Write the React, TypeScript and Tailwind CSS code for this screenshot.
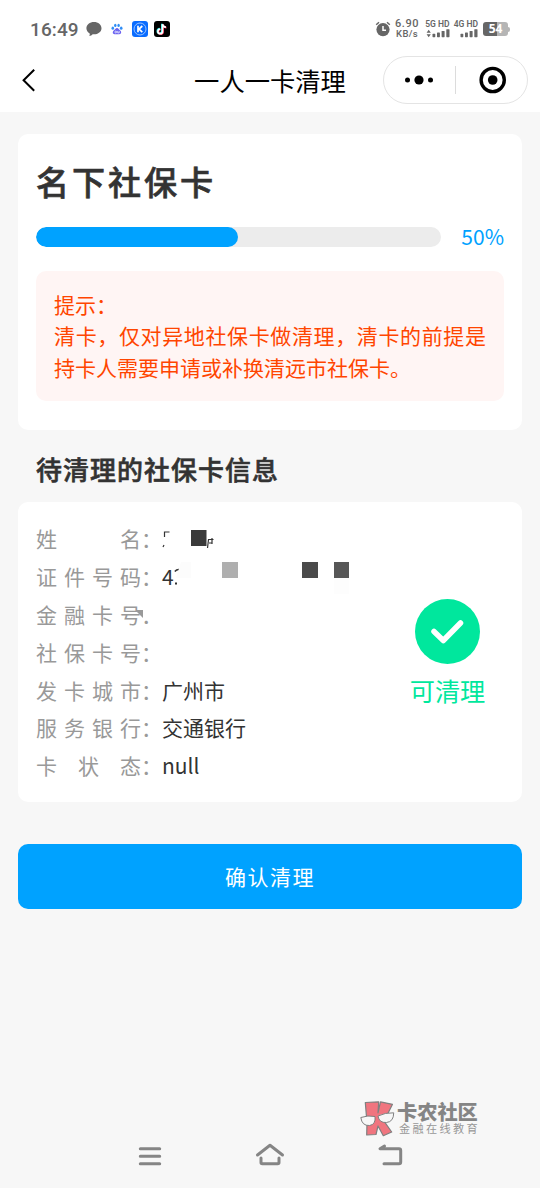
import type { ReactNode } from "react";

type InfoRow = {
  label: string;
  value?: string;
};

const rows: InfoRow[] = [
  { label: "姓名" },
  { label: "证件号码", value: "4" },
  { label: "金融卡号" },
  { label: "社保卡号" },
  { label: "发卡城市", value: "广州市" },
  { label: "服务银行", value: "交通银行" },
  { label: "卡状态", value: "null" },
];

const progress = 50;

function BaiduIcon() {
  return (
    <svg width="12" height="12" viewBox="0 0 12 12">
      <ellipse cx="1.8" cy="5.2" rx="1.3" ry="1.6" fill="#2f8df5" />
      <ellipse cx="4.3" cy="2.4" rx="1.2" ry="1.7" fill="#2f8df5" />
      <ellipse cx="7.6" cy="2.4" rx="1.2" ry="1.7" fill="#2f8df5" />
      <ellipse cx="10.2" cy="5.2" rx="1.3" ry="1.6" fill="#2f8df5" />
      <path
        d="M6 5c1.4 0 2 1.6 3.2 2.6 1.7 1.5 1 3.7-.9 3.7H3.6c-1.9 0-2.5-2.2-.8-3.7C4 6.6 4.6 5 6 5z"
        fill="#6a62f0"
      />
      <circle cx="4.7" cy="9" r=".9" fill="none" stroke="#fff" strokeWidth=".7" />
      <path d="M6.7 7.9v2h1.5v-2" fill="none" stroke="#fff" strokeWidth=".7" />
    </svg>
  );
}

function KIcon() {
  return (
    <svg width="16" height="16" viewBox="0 0 16 16">
      <rect width="16" height="16" rx="3" fill="#0a6cff" />
      <circle cx="8" cy="8" r="6" fill="none" stroke="#a9cdff" strokeWidth=".9" />
      <path d="M6 4.8v6.4M10.3 5L7 8l3.3 3.2" fill="none" stroke="#fff" strokeWidth="1.7" />
    </svg>
  );
}

function TikTokIcon() {
  const note = "M8.5 3.2v7.2a2.3 2.3 0 1 1-2.3-2.3M8.5 3.2c.3 1.9 1.6 2.9 3.4 3";
  return (
    <svg width="16" height="16" viewBox="0 0 16 16">
      <rect width="16" height="16" rx="3" fill="#000" />
      <g fill="none" strokeWidth="1.7">
        <path d={note} stroke="#25f4ee" transform="translate(-.6 -.4)" />
        <path d={note} stroke="#fe2c55" transform="translate(.6 .4)" />
        <path d={note} stroke="#fff" />
      </g>
    </svg>
  );
}

function Signal({ label, arrows }: { label: string; arrows?: boolean }) {
  return (
    <div className="flex w-[24px] flex-col items-end">
      <span className="text-[8.5px] leading-[8px] font-semibold whitespace-nowrap">{label}</span>
      <svg className="mt-px" width="24" height="9" viewBox="0 0 24 9" fill="#666">
        {arrows ? <path d="M.6 3.7L2.7.8l2.1 2.9zM.6 5.3l2.1 2.9 2.1-2.9z" /> : null}
        <rect x="6.5" y="4.8" width="2.8" height="3.4" rx=".6" />
        <rect x="11" y="3.5" width="2.9" height="4.7" rx=".6" />
        <rect x="15.6" y="2" width="3" height="6.2" rx=".6" />
        <rect x="20.3" y=".2" width="3.2" height="8" rx=".6" />
      </svg>
    </div>
  );
}

function StatusBar() {
  return (
    <div className="flex h-[56px] items-center pt-[2px] pr-[30px] pl-[30px] text-[#666]">
      <span className="w-[56px] text-[19px] leading-none font-medium tracking-[0.1px] [font-family:Roboto,sans-serif]">
        16:49
      </span>
      <svg width="16" height="16" viewBox="0 0 16 16" fill="#666">
        <path d="M8 1c4.2 0 7.5 2.7 7.5 6.200S12.200 13.300 8 13.300c-.5 0-1 0-1.400-.1-.8.9-2 1.600-3.300 1.700.5-.7.6-1.600.4-2.500C1.700 11.300.4 9.400.4 7.200.4 3.700 3.800 1 8 1z" />
      </svg>
      <div className="ml-[9px] flex items-center">
        <BaiduIcon />
        <span className="ml-[9px]">
          <KIcon />
        </span>
        <span className="ml-[6px]">
          <TikTokIcon />
        </span>
      </div>

      <div className="ml-auto flex items-center">
        <svg width="16" height="16" viewBox="0 0 16 16">
          <circle cx="8" cy="8.6" r="6.6" fill="#666" />
          <path d="M1.200 3.700L4 1.300M14.800 3.700L12 1.300" stroke="#666" strokeWidth="1.5" />
          <path d="M8 5v4.200h3" fill="none" stroke="#fff" strokeWidth="1.5" />
        </svg>
        <div className="ml-[4px] flex w-[25px] flex-col items-center font-medium [font-family:Roboto,sans-serif]">
          <span className="text-[11px] leading-[10px] tracking-[0.5px]">6.90</span>
          <span className="text-[9.5px] leading-[10px] tracking-[0.3px]">KB/s</span>
        </div>
        <div className="ml-[6px] flex gap-[4.5px] [font-family:Roboto,sans-serif]">
          <Signal label="5G HD" arrows />
          <Signal label="4G HD" />
        </div>
        <div className="ml-[5px] flex items-center">
          <div className="flex h-[14px] w-[25px] items-center justify-center rounded-[3px] bg-[linear-gradient(90deg,#666_56%,#b5b5b5_56%)] text-[12px] leading-none font-bold text-white [font-family:'Open_Sans',sans-serif]">
            54
          </div>
          <div className="h-[5px] w-[2px] rounded-r-sm bg-[#b5b5b5]" />
        </div>
      </div>
    </div>
  );
}

function NavBar() {
  return (
    <div className="relative flex h-[56px] items-center justify-center pb-[6px]">
      <svg className="absolute top-[12px] left-[21px]" width="16" height="25" viewBox="0 0 16 25">
        <path d="M13.2 1.800L2.600 12.300l10.600 10.500" fill="none" stroke="#000" strokeWidth="2" />
      </svg>
      <h1 className="text-[25.3px] leading-none text-black">一人一卡清理</h1>
      <div className="absolute top-0 left-[383px] flex h-[48px] w-[145px] items-center rounded-full border border-[#e4e4e4] bg-white">
        <svg width="71" height="46" viewBox="0 0 71 46">
          <circle cx="23.5" cy="23" r="2.5" />
          <circle cx="35" cy="23" r="4.6" />
          <circle cx="46.5" cy="23" r="2.5" />
        </svg>
        <div className="h-[28px] w-px bg-[#dcdcdc]" />
        <svg width="71" height="46" viewBox="0 0 71 46">
          <circle cx="36.7" cy="23" r="11.6" fill="none" stroke="#000" strokeWidth="3.4" />
          <circle cx="36.7" cy="23" r="4.8" />
        </svg>
      </div>
    </div>
  );
}

function Card({ className, children }: { className: string; children: ReactNode }) {
  return <section className={`mx-[18px] rounded-[10px] bg-white px-[18px] ${className}`}>{children}</section>;
}

// blocks hiding the personal data, drawn over the first three rows
function Redaction() {
  return (
    <svg className="absolute top-[28px] left-[118px]" width="220" height="94" viewBox="136 530 220 94">
      <path d="M164.500 537v-5h5M163 547l1-2" fill="none" stroke="#333" strokeWidth="1.2" />
      <rect x="191" y="530" width="15.5" height="16" fill="#3a3a3a" />
      <path d="M207.500 548l1-8.500h5M209 543h3.500M212 538v6" fill="none" stroke="#333" strokeWidth="1.2" />
      <path d="M174.800 571.500q2.600-3 6.600-1.300" fill="none" stroke="#333" strokeWidth="1.5" />
      <rect x="175" y="582.5" width="2" height="2" fill="#333" />
      <path d="M181 562h10v16h-15z" fill="#fcfcfc" />
      <rect x="222" y="562" width="16" height="16" fill="#afafaf" />
      <rect x="302" y="562" width="16" height="16" fill="#4a4a4a" />
      <rect x="334" y="562" width="15" height="16" fill="#575757" />
      <rect x="334" y="578" width="15" height="16" fill="#fdfdfd" />
      <rect x="143" y="608" width="8" height="10" fill="#fff" />
      <path d="M135 610h8v8z" fill="#999" />
    </svg>
  );
}

function Watermark() {
  return (
    <div className="flex w-[120px] items-center">
      <svg className="shrink-0" width="35" height="36" viewBox="0 0 35 36">
        <path
          d="M5.300 1.500l13.400-.7-.7 11L20.500.8l12 2.500-6 12-3 4L31.700 31l-8.400 3.700L18 25l-2 8.500-9.300.5L7 22z"
          fill="#f0757f"
          stroke="#808080"
          strokeWidth="1.2"
          strokeLinejoin="round"
        />
        <g fill="#f7f7f7" stroke="#808080" strokeWidth="1">
          <path d="M.8 16.500q7-2.500 14.200-1 1 8-5.500 9Q2 25 .8 16.500z" />
          <path d="M18 15q7-3.500 15.700-3.200 0 9-7.200 9.700-7.500.5-8.500-6.500z" />
        </g>
      </svg>
      <div className="ml-[2px] flex flex-col text-[#858585]">
        <span className="text-[20.2px] leading-[18px] font-black whitespace-nowrap">卡农社区</span>
        <span className="pb-px pl-[2px] text-[11.2px] leading-[14px] tracking-[2.3px] whitespace-nowrap text-[#979797]">
          金融在线教育
        </span>
      </div>
    </div>
  );
}

function SystemNav() {
  return (
    <div className="flex h-[51px] items-start justify-between px-[136px] pt-[5px]">
      <svg width="28" height="28" viewBox="0 0 28 28" stroke="#858585" strokeWidth="3" strokeLinecap="round">
        <path d="M4.300 6.800h19.400M4.300 14.300h19.400M4.300 21.800h19.400" />
      </svg>
      <svg width="30" height="28" viewBox="0 0 30 28" fill="none" stroke="#858585" strokeWidth="3" strokeLinecap="round" strokeLinejoin="round">
        <path d="M2.500 13L15 3.300 27.500 13M6 16v4.500q0 1.300 1.300 1.300h15.400q1.300 0 1.300-1.300V16" />
      </svg>
      <svg width="28" height="28" viewBox="0 0 28 28" fill="none" stroke="#858585" strokeWidth="3" strokeLinecap="round" strokeLinejoin="round">
        <path d="M8.500 4L4 6.800h19q1.700 0 1.700 1.700v11.600q0 1.700-1.700 1.700H8" />
      </svg>
    </div>
  );
}

export default function App() {
  return (
    <div className="flex h-[1188px] w-[540px] flex-col overflow-hidden bg-[#f7f7f7] text-[#333] [font-family:'Noto_Sans_CJK_SC',sans-serif]">
      <header className="h-[112px] bg-white">
        <StatusBar />
        <NavBar />
      </header>

      <Card className="mt-[21.6px] h-[296.4px] pt-[26px]">
        <h2 className="text-[33.12px] leading-[42px] font-medium tracking-[2.88px] [-webkit-text-stroke:0.6px_#333]">
          名下社保卡
        </h2>
        <div className="mt-[25px] flex h-[20px] items-center">
          <div className="h-[20px] w-[404.6px] overflow-hidden rounded-full bg-[#ececec]">
            <div className="h-full rounded-full bg-[#00a2ff]" style={{ width: `${progress}%` }} />
          </div>
          <span className="ml-auto text-[21px] leading-none text-[#00a2ff]">{progress}%</span>
        </div>
        <div className="mt-[24px] rounded-[10px] bg-[#fff5f4] p-[18px] text-justify text-[21px] leading-[31.5px] text-[#ff4500]">
          <p>提示：</p>
          <p>清卡，仅对异地社保卡做清理，清卡的前提是持卡人需要申请或补换清远市社保卡。</p>
        </div>
      </Card>

      <h3 className="mt-[21px] ml-[36px] text-[25.92px] leading-[36px] font-medium tracking-[1.08px] [-webkit-text-stroke:0.6px_#333]">
        待清理的社保卡信息
      </h3>

      <Card className="relative mt-[15px] flex h-[300px] pt-[18.4px]">
        <dl className="flex-1 text-[21px] leading-[37.8px]">
          {rows.map((row) => (
            <div key={row.label} className="flex h-[37.8px]">
              <dt className="flex text-[#999]">
                <span className="w-[105px] [text-align-last:justify]">{row.label}</span>：
              </dt>
              <dd>{row.value}</dd>
            </div>
          ))}
        </dl>
        <div className="mr-[18.5px] flex w-[76px] flex-col items-center pt-[79px] text-[#00e79d]">
          <svg width="65" height="65" viewBox="0 0 65 65">
            <circle cx="32.5" cy="32.5" r="32.5" fill="currentColor" />
            <path
              d="M19 32.500l9.300 9L45.500 24"
              fill="none"
              stroke="#fff"
              strokeWidth="5.5"
              strokeLinecap="round"
              strokeLinejoin="round"
            />
          </svg>
          <span className="mt-[7.6px] text-[25.2px] leading-[36px] whitespace-nowrap">可清理</span>
        </div>
        <Redaction />
      </Card>

      <button
        type="button"
        className="mx-[18px] mt-[42.5px] h-[64.5px] shrink-0 rounded-[10px] bg-[#00a2ff] text-[21px] leading-none tracking-[1.44px] text-white"
      >
        确认清理
      </button>

      <div className="mt-auto ml-[360px]">
        <Watermark />
      </div>
      <SystemNav />
    </div>
  );
}
